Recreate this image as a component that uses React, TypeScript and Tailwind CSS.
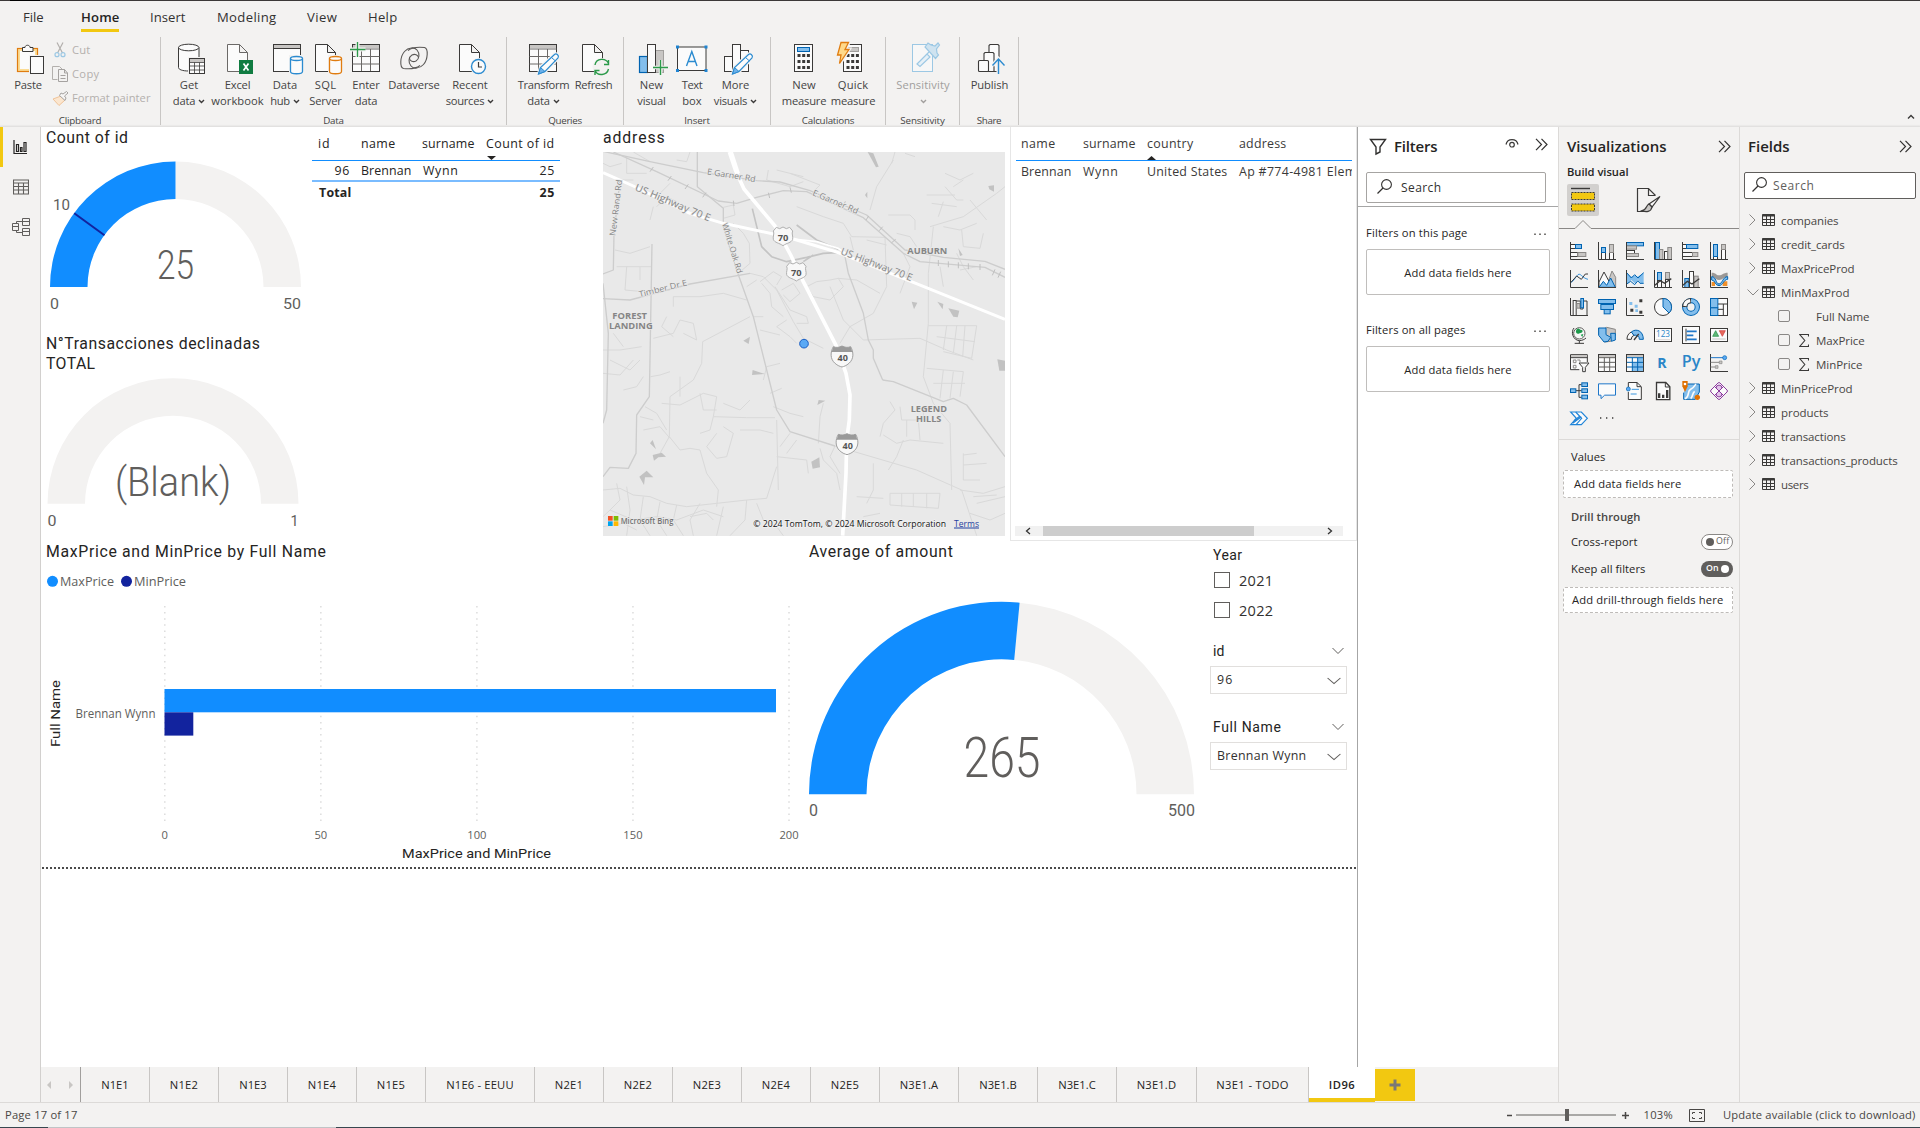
import React, { useLayoutEffect, useRef } from "react";

const INK = "#3b3a39";
const BLUE = "#0063b1";
const SKY = "#83beec";
const GRAY = "#c8c6c4";
const PAPER = "#fbfbfb";

/* Text run tracked so that it spans the given number of pixels. */
function Fit({ w, className = "", children }: { w: number; className?: string; children: string }) {
  const ref = useRef<HTMLSpanElement>(null);
  useLayoutEffect(() => {
    const el = ref.current;
    if (!el) return;
    el.style.letterSpacing = "0px";
    const natural = el.getBoundingClientRect().width;
    el.style.letterSpacing = `${(w + 0.5 - natural) / children.length}px`;
  }, [w, children]);
  return (
    <span ref={ref} className={`inline-block whitespace-pre ${className}`}>
      {children}
    </span>
  );
}

type BoxProps = { x: number; y: number; w: number; h: number; children: React.ReactNode; className?: string };
const Draw = ({ x, y, w, h, children, className = "" }: BoxProps) => (
  <svg width={w} height={h} viewBox={`${x} ${y} ${w} ${h}`} fill="none" className={`block shrink-0 overflow-visible ${className}`}>
    {children}
  </svg>
);

const R = ({ b, f = PAPER, s = INK, sw = 1 }: { b: [number, number, number, number]; f?: string; s?: string; sw?: number }) => (
  <rect x={b[0]} y={b[1]} width={b[2]} height={b[3]} fill={f} stroke={s} strokeWidth={sw} />
);

/* ---------- Ribbon icons ---------- */

const PasteIcon = () => (
  <Draw x={16} y={43} w={30} h={32}>
    <R b={[17.5, 48.5, 20, 23]} f="#fbdc94" s="#e07c10" sw={1.2} />
    <rect x="20" y="51" width="15" height="18" fill={PAPER} />
    <path d="M22.5 51.5v-4h2.5c0-3 5-3 5 0h3v4z" fill={PAPER} stroke={INK} />
    <rect x="29" y="55" width="15" height="19" fill="#f3f2f1" />
    <R b={[30.5, 56.5, 13, 17]} />
  </Draw>
);
const CutIcon = () => (
  <Draw x={53} y={42} w={15} h={16}>
    <path d="M57 42.5 62.5 53M63 42.5 57.500 53" stroke="#b3b0ad" strokeWidth="1.2" />
    <circle cx="57" cy="54.700" r="2" stroke="#9cc8e4" strokeWidth="1.2" />
    <circle cx="63" cy="54.700" r="2" stroke="#9cc8e4" strokeWidth="1.2" />
  </Draw>
);
const CopyIcon = () => (
  <Draw x={52} y={65} w={17} h={17}>
    <path d="M57.500 78.500h-5v-13h7l3 3" stroke="#b3b0ad" />
    <path d="M58.500 68.500h6l3 3.500v8.500h-9zM64.500 68.500v3.500h3M60.500 74.500h5M60.500 77.500h5" stroke="#a5a2a0" />
  </Draw>
);
const PainterIcon = () => (
  <Draw x={52} y={88} w={17} h={17}>
    <path d="m53 97 8-3 4 4-6 5.500z" fill="#fbe6cf" stroke="#efc399" />
    <path d="m59.500 93.500 5.500 5 1-2.500-1.500-2 3.500-3-1.500-1.500-3.500 2.500-2-1z" fill="#f6f5f4" stroke="#a5a2a0" />
  </Draw>
);
const GetDataIcon = () => (
  <Draw x={177} y={43} w={30} h={32}>
    <path d="M178.500 47.500v20c0 2 4 3.500 10 3.500h10.500v-23.500" fill={PAPER} stroke={INK} />
    <ellipse cx="188.700" cy="47.500" rx="10.200" ry="3.300" fill={PAPER} stroke={INK} />
    <rect x="188" y="57" width="18" height="18" fill="#f3f2f1" />
    <R b={[189.500, 58.500, 15, 15]} />
    <path d="M190 60.500h14" stroke={GRAY} strokeWidth="3" />
    <path d="M189.500 62.500h15M189.500 66h15M189.500 70h15M194.500 62.500v11M199.500 62.500v11" stroke={INK} strokeWidth=".8" />
  </Draw>
);
const Page = ({ x, y = 44.5, w = 20, h = 27, s = INK }: { x: number; y?: number; w?: number; h?: number; s?: string }) => (
  <path d={`M${x} ${y}h${w - 8}l8 8v${h - 8}h-${w}zM${x + w - 8} ${y}v8h8`} fill={PAPER} stroke={s} />
);
const ExcelIcon = () => (
  <Draw x={226} y={43} w={28} h={32}>
    <Page x={227.5} s="#6b6967" />
    <rect x="239" y="60" width="14" height="14" fill="#107c41" />
    <path d="m243.500 63.500 5 7M248.500 63.500l-5 7" stroke="#fff" strokeWidth="1.700" />
  </Draw>
);
const Cyl = ({ x, c }: { x: number; c: string }) => (
  <>
    <rect x={x - 1.5} y="55" width="15" height="20" fill="#f3f2f1" />
    <path d={`M${x} 58.500v13c0 3 12 3 12 0v-13`} fill={PAPER} stroke={c} strokeWidth="1.300" />
    <ellipse cx={x + 6} cy="58.500" rx="6" ry="2" fill={PAPER} stroke={c} strokeWidth="1.300" />
  </>
);
const DataHubIcon = () => (
  <Draw x={271} y={43} w={32} h={32}>
    <R b={[272.500, 44.500, 27, 27]} />
    <path d="M273 46.500h26" stroke={GRAY} strokeWidth="3" />
    <path d="M272.500 48.500h27" stroke={INK} />
    <Cyl x={289.500} c="#2b8bd0" />
  </Draw>
);
const SqlIcon = () => (
  <Draw x={314} y={43} w={29} h={32}>
    <Page x={315.500} />
    <Cyl x={329.500} c="#e07c10" />
  </Draw>
);
const EnterDataIcon = () => (
  <Draw x={349} y={43} w={32} h={32}>
    <R b={[352.500, 44.500, 27, 27]} />
    <path d="M353 46.500h26" stroke={GRAY} strokeWidth="3" />
    <path d="M352.500 49h27M352.500 56.500h27M352.500 64h27M361.500 49v22M370.500 49v22" stroke="#6b6967" />
    <path d="M350 49.500h15.500M357.500 42v15" stroke="#f3f2f1" strokeWidth="4" />
    <path d="M350 49.500h15.500M357.500 42v15" stroke="#2b9a4a" strokeWidth="1.300" />
  </Draw>
);
const DataverseIcon = () => (
  <Draw x={399} y={43} w={30} h={32}>
    <g stroke="#5a5856" strokeWidth="1.100">
      <path d="M420 65.500c-5 4-12 3.500-16.500 3-4-1-3.500-12 1-17 4-4.500 10-4.500 12.500-1.500 3 3.500 2.500 9-1 11-3 1.500-6 0-6.500-2.500" />
      <path d="M408 50.500c5-4 12-3.500 16.500-3 4 1 3.500 12-1 17-4 4.500-10 4.500-12.500 1.500-3-3.500-2.500-9 1-11 3-1.500 6 0 6.500 2.500" />
    </g>
  </Draw>
);
const RecentIcon = () => (
  <Draw x={458} y={43} w={29} h={32}>
    <Page x={459.500} />
    <circle cx="478.500" cy="66.500" r="8.500" fill="#f3f2f1" />
    <circle cx="478.500" cy="66.500" r="7" fill={PAPER} stroke="#2b8bd0" strokeWidth="1.400" />
    <path d="M478.500 62v5h3.500" stroke={INK} strokeWidth="1.200" />
  </Draw>
);
const Pencil = ({ x }: { x: number }) => (
  <g transform={`translate(${x} 54)`}>
    <path d="m0 20 2-7L16 0c2.500-1 5 1.500 4 4L7 17.500z" fill="#f3f2f1" stroke="#f3f2f1" strokeWidth="3" />
    <path d="m0 20 2-6.500L16 .5c2-1.500 5 1 3.500 3.500L6.500 17.500z" fill={PAPER} stroke="#2b8bd0" strokeWidth="1.200" />
    <path d="m0 20 2-6.500 4.500 4z" fill="#6db1ea" stroke="#2b8bd0" />
    <path d="m13 3.500 4 3.500" stroke="#2b8bd0" />
  </g>
);
const TransformIcon = () => (
  <Draw x={528} y={43} w={32} h={32}>
    <R b={[529.500, 44.500, 27, 27]} />
    <path d="M530 46.500h26" stroke={GRAY} strokeWidth="3" />
    <path d="M529.500 49h27M529.500 56.500h27M529.500 64h27M538.500 49v22M547.500 49v22" stroke="#6b6967" />
    <Pencil x={538.500} />
  </Draw>
);
const RefreshIcon = () => (
  <Draw x={581} y={43} w={30} h={32}>
    <Page x={582.500} />
    <circle cx="601.500" cy="67" r="9" fill="#f3f2f1" />
    <path d="M595 65c1-7 11-7.500 13.500-1.500M608.500 60v4.500H604M608.500 69c-1.500 6.500-11 7.500-13.500 1.500M595 75v-4.500h4.500" stroke="#2b9a4a" strokeWidth="1.400" />
  </Draw>
);
const NewVisualIcon = () => (
  <Draw x={638} y={43} w={31} h={32}>
    <R b={[639.500, 56.500, 8, 16]} f={SKY} s={BLUE} sw={1.2} />
    <R b={[655.500, 50.500, 8, 22]} f={GRAY} s="#a19f9d" />
    <R b={[647.500, 44.500, 8, 28]} />
    <path d="M653 67.500h15M660.500 60v15" stroke="#f3f2f1" strokeWidth="3.500" />
    <path d="M653 67.500h15M660.500 60v15" stroke="#2b9a4a" strokeWidth="1.400" />
  </Draw>
);
const TextBoxIcon = () => (
  <Draw x={676} y={43} w={32} h={32}>
    <R b={[677.500, 47, 28.500, 23.500]} />
    <path d="m686.500 66 5.300-14.500L697 66M688.300 61.500h7" stroke="#2b8bd0" strokeWidth="1.400" />
    <path d="M676 45.500h3v3h-3zM704.500 45.500h3v3h-3zM676 69h3v3h-3zM704.500 69h3v3h-3z" fill="#1f84d2" />
  </Draw>
);
const MoreVisualsIcon = () => (
  <Draw x={723} y={43} w={31} h={32}>
    <R b={[724.500, 56.500, 8, 15]} />
    <R b={[740.500, 50.500, 8, 21]} />
    <R b={[732.500, 44.500, 8, 27]} />
    <Pencil x={732.500} />
  </Draw>
);
const CalcBody = ({ x, light }: { x: number; light?: boolean }) => (
  <>
    <R b={[x, 44.5, 18, 27]} />
    <R b={[x + 3, 47.5, 12, 4]} f={light ? GRAY : SKY} s={light ? "#a19f9d" : BLUE} />
    {[54, 60, 66].map((y) =>
      [3, 7.700, 12.400].map((d) => <rect key={`${y}-${d}`} x={x + d} y={y} width="3" height="3" fill={INK} />),
    )}
  </>
);
const MeasureIcon = () => (
  <Draw x={793} y={43} w={22} h={32}>
    <CalcBody x={794.500} />
  </Draw>
);
const QuickIcon = () => (
  <Draw x={836} y={43} w={28} h={32}>
    <CalcBody x={843.500} light />
    <path d="M841 42h8.500l-4 7h4l-10 16 2-9.500H837z" fill="#f3f2f1" stroke="#f3f2f1" strokeWidth="3" />
    <path d="M841 42.500h7.500l-3.500 7h4l-9.500 14 1.500-8.500H837.500z" fill="#ffd98a" stroke="#e07c10" strokeWidth="1.300" />
  </Draw>
);
const SensitivityIcon = () => (
  <Draw x={911} y={43} w={29} h={32}>
    <R b={[912.500, 44.500, 20, 27]} f="#f7f7f7" s="#9cc8e4" />
    <path d="m920 61 9-9M917 64l10-10 3 3-10 9.500z" stroke="#9cc8e4" strokeWidth="1.200" fill="#e6f0f7" />
    <path d="m925 47 3-4 3 2 4 1 3-3 1.500 2-3 4 .5 4 1.500 2-3 3.500z" fill="#cfe3f0" stroke="#9cc8e4" strokeWidth="1.200" />
  </Draw>
);
const PublishIcon = () => (
  <Draw x={977} y={43} w={30} h={32}>
    <g fill={PAPER} stroke={INK} strokeWidth="1.100">
      <path d="M989 71.500V45.500l1-1h8l1 1v26z" />
      <path d="M984 71.500V53.500l1-1h8l1 1v18z" />
      <rect x="978.500" y="60.500" width="10" height="11" rx="1" />
    </g>
    <path d="M998.500 75V59M992.500 65.500l6-6.500 6 6.500" stroke="#f3f2f1" strokeWidth="4" />
    <path d="M998.500 74V59.500M992.500 65.500l6-6.500 6 6.500" stroke="#2b8bd0" strokeWidth="1.400" />
  </Draw>
);

const Caret = ({ c = "#3b3a39" }: { c?: string }) => (
  <svg width="7" height="5" viewBox="0 0 7 5" fill="none" className="shrink-0">
    <path d="m1 1 2.500 2.500L6 1" stroke={c} strokeWidth="1.400" />
  </svg>
);

type Item = { w: number; icon: React.ReactNode; a: [string, number]; b?: [string, number]; caret?: boolean; dim?: boolean; dx?: string };
const RibbonItem = ({ w, icon, a, b, caret, dim, dx = "" }: Item) => (
  <div className={`flex shrink-0 flex-col items-center pt-[6px] text-[11.2px] ${dim ? "text-[#a19f9d]" : "text-[#444]"}`} style={{ width: w }}>
    <div className={`flex h-8 items-start ${dx}`}>{icon}</div>
    <div className="mt-[2px] flex h-4 items-center">
      <Fit w={a[1]}>{a[0]}</Fit>
    </div>
    <div className="flex h-4 items-center gap-[3px]">
      {b && <Fit w={b[1]}>{b[0]}</Fit>}
      {caret && <Caret c={dim ? "#a19f9d" : "#3b3a39"} />}
    </div>
  </div>
);
const RibbonGroup = ({ w, pl, label, lw, items }: { w: number; pl: number; label: string; lw: number; items: Item[] }) => (
  <div className="flex h-[88px] shrink-0 flex-col border-r border-[#c8c6c4]" style={{ width: w }}>
    <div className="flex h-[76px]" style={{ paddingLeft: pl }}>
      {items.map((it, i) => (
        <RibbonItem key={i} {...it} />
      ))}
    </div>
    <div className="flex h-[14px] items-center justify-center pt-[5px] text-[9.800px] leading-[14px] text-[#444]">
      <Fit w={lw}>{label}</Fit>
    </div>
  </div>
);

const Ribbon = () => (
  <div className="flex h-[90px] shrink-0 bg-[#f3f2f1]">
    <div className="flex h-[88px] w-[161px] shrink-0 flex-col border-r border-[#c8c6c4] text-[11.2px]">
      <div className="flex h-[76px]">
        <div className="flex w-[52px] flex-col items-center pt-[6px] pl-[4px] text-[#444]">
          <div className="flex h-8 pl-[6px]"><PasteIcon /></div>
          <div className="mt-[2px] flex h-4 items-center"><Fit w={27}>Paste</Fit></div>
        </div>
        <div className="flex flex-col pt-[1px] text-[#b3b0ad]">
          <div className="flex h-6 items-center gap-[4px] pl-px"><CutIcon /><Fit w={18}>Cut</Fit></div>
          <div className="flex h-6 items-center gap-[3px]"><CopyIcon /><Fit w={27}>Copy</Fit></div>
          <div className="flex h-6 items-center gap-[3px]"><PainterIcon /><Fit w={78}>Format painter</Fit></div>
        </div>
      </div>
      <div className="flex h-[14px] items-center justify-center pt-[5px] text-[9.800px] leading-[14px] text-[#444]"><Fit w={42}>Clipboard</Fit></div>
    </div>
    <RibbonGroup w={346} pl={8} label="Data" lw={20} items={[
      { w: 40, icon: <GetDataIcon />, a: ["Get", 18], b: ["data", 22], caret: true, dx: "pl-[6px]" },
      { w: 57, icon: <ExcelIcon />, a: ["Excel", 25], b: ["workbook", 52], dx: "pl-[4px]" },
      { w: 38, icon: <DataHubIcon />, a: ["Data", 24], b: ["hub", 19], caret: true, dx: "pl-[5px]" },
      { w: 43, icon: <SqlIcon />, a: ["SQL", 21], b: ["Server", 32], dx: "pl-[5px]" },
      { w: 38, icon: <EnterDataIcon />, a: ["Enter", 27], b: ["data", 22], dx: "pr-[2px]" },
      { w: 58, icon: <DataverseIcon />, a: ["Dataverse", 51] },
      { w: 54, icon: <RecentIcon />, a: ["Recent", 35], b: ["sources", 38], caret: true, dx: "pl-[5px]" },
    ]} />
    <RibbonGroup w={117} pl={8} label="Queries" lw={33} items={[
      { w: 57, icon: <TransformIcon />, a: ["Transform", 51], b: ["data", 22], caret: true },
      { w: 43, icon: <RefreshIcon />, a: ["Refresh", 37], dx: "pl-[4px]" },
    ]} />
    <RibbonGroup w={147} pl={8} label="Insert" lw={25} items={[
      { w: 39, icon: <NewVisualIcon />, a: ["New", 23], b: ["visual", 28], dx: "pl-[4px]" },
      { w: 42, icon: <TextBoxIcon />, a: ["Text", 20], b: ["box", 19] },
      { w: 45, icon: <MoreVisualsIcon />, a: ["More", 27], b: ["visuals", 33], caret: true, dx: "pl-[6px]" },
    ]} />
    <RibbonGroup w={115} pl={8} label="Calculations" lw={52} items={[
      { w: 50, icon: <MeasureIcon />, a: ["New", 23], b: ["measure", 44] },
      { w: 48, icon: <QuickIcon />, a: ["Quick", 30], b: ["measure", 44], dx: "pr-[6px]" },
    ]} />
    <RibbonGroup w={74} pl={8} label="Sensitivity" lw={44} items={[
      { w: 58, icon: <SensitivityIcon />, a: ["Sensitivity", 53], caret: true, dim: true, dx: "pl-[5px]" },
    ]} />
    <RibbonGroup w={59} pl={8} label="Share" lw={24} items={[{ w: 43, icon: <PublishIcon />, a: ["Publish", 37], dx: "pl-[4px]" }]} />
    <div className="flex flex-1 items-end justify-end pr-[5px] pb-[7px]">
      <svg width="8" height="6" viewBox="0 0 8 6" fill="none"><path d="m1 4.500 3-3 3 3" stroke={INK} strokeWidth="1.400" /></svg>
    </div>
  </div>
);

const menus: [string, number, number][] = [
  ["File", 20, 38], ["Home", 38, 31], ["Insert", 35, 32], ["Modeling", 59, 31], ["View", 30, 31], ["Help", 29, 0],
];
const Menu = () => (
  <div className="flex h-9 shrink-0 bg-[#f3f2f1] pl-[23px] text-[13.100px] text-[#323130]">
    {menus.map(([t, w, gap]) => (
      <div key={t} className="flex shrink-0 flex-col" style={{ marginRight: gap, width: w }}>
        <div className={`flex h-7 items-center pt-[5px] ${t === "Home" ? "font-semibold text-[#252423]" : ""}`}>
          <Fit w={w}>{t}</Fit>
        </div>
        {t === "Home" && <div className="h-[3px] bg-[#f2c811]" />}
      </div>
    ))}
  </div>
);

/* ---------- Canvas visuals ---------- */

type TProps = { x: number; y: number; w?: number; s: number; a?: "start" | "middle" | "end"; c?: string; wt?: number; f?: string; children: string; rot?: number };
const ST = ({ x, y, w, s, a = "start", c = "#605e5c", wt = 400, f = "Roboto, sans-serif", children, rot }: TProps) => (
  <text
    x={x} y={y} fontSize={s} fill={c} fontWeight={wt} fontFamily={f} textAnchor={a}
    textLength={w} lengthAdjust="spacingAndGlyphs"
    transform={rot ? `rotate(${rot} ${x} ${y})` : undefined}
  >
    {children}
  </text>
);

function arc(cx: number, cy: number, R0: number, r0: number, from: number, to: number) {
  const p = (r: number, t: number) => `${cx - r * Math.cos(Math.PI * t)} ${cy - r * Math.sin(Math.PI * t)}`;
  return `M${p(R0, from)}A${R0} ${R0} 0 0 1 ${p(R0, to)}L${p(r0, to)}A${r0} ${r0} 0 0 0 ${p(r0, from)}Z`;
}
const Gauge = ({ cx, cy, r1, r2, v, children }: { cx: number; cy: number; r1: number; r2: number; v: number; children?: React.ReactNode }) => (
  <>
    <path d={arc(cx, cy, r1, r2, v, 1)} fill="#f3f2f1" />
    {v > 0 && <path d={arc(cx, cy, r1, r2, 0, v)} fill="#118dff" />}
    {children}
  </>
);

const SEG = "'Open Sans', sans-serif";

const roadsMid = [
  "M39 94 180 125 340 158 500 182 570 186 660 212 830 285 945 390 1060 412 1185 424 1245 448",
  "M70 96 200 155 385 243 440 250 500 232 580 212 650 215 820 293 940 400 990 425 1185 442 1245 472",
  "M322 96V200L400 265V320L440 450 490 590 560 870 600 935 735 978",
  "M39 536 120 540 300 492 480 460",
  "M90 180 72 340 70 450 39 462M39 490 55 640 50 870 39 910",
  "M186 372 178 830 140 885 138 1000 115 1045 60 1042 39 1070",
  "M878 780 910 785 1060 845 1090 835 1130 855 1245 1010",
  "M765 410 775 460 820 580 835 660 850 690 850 715 878 780",
];
const roadsThin = [
  "M735 978 980 1050 1115 1110 1160 1247M445 460 480 430 478 370 460 340 430 310M400 262 430 255 435 285 400 295",
  "M480 460 520 470 560 510 610 605 640 655 700 685M510 485 550 455 575 470 560 495M575 510 610 490 630 520 600 545 580 525",
  "M555 500 600 570 650 590 655 610 620 610M590 600 560 620 600 650 620 670M515 490 540 520 545 560 580 590",
  "M650 500 680 485 720 480 745 475 760 500 720 540 670 530zM745 475 800 480 870 520M720 500 760 600 820 660 990 655 1070 690 1150 720",
  "M785 350 885 352 890 500 850 580 780 620 750 670M830 360 890 375M790 390 780 350",
  "M535 150 530 180 600 200 640 185M600 160 690 195 670 215M560 150 640 170M620 260 700 290 760 310 785 350",
  "M1030 320 1015 460 1015 610 1000 770 1030 850 1080 910 1085 1110M1020 320 1120 290 1220 220 1245 200M1140 240 1190 300",
  "M1010 225 1095 225M1065 160 1110 180 1150 160M1065 200 1100 240 1120 240M1090 200 1120 180M1025 250 1100 260M1045 290 1060 245",
  "M910 120 860 200 840 270M915 96 905 130M945 100 975 110M895 285 960 285 975 300 975 330M920 340 960 350 980 380M940 400 960 440 930 520",
  "M1115 330 1120 380 1170 385 1180 340M1060 320 1110 330 1160 310M1100 400 1120 440 1150 480M1110 450 1160 440M1050 440 1060 500",
  "M1015 617H1160L1145 715 1060 695M1070 617 1060 690M1100 617 1090 700M1125 617 1118 710M1040 650 1155 665M1010 745 1120 755 1110 830M1030 790H1125M1060 750 1050 835M1090 755 1080 835",
  "M39 690 90 690 155 680M60 720 120 750 150 720M70 640 100 680M39 760 90 765 130 720M100 810 140 800 160 770M80 180 130 180M95 130 60 140 39 130M110 110 110 160 170 160",
  "M80 440H185M110 440 105 510 160 515M150 440V480M75 390 120 400 180 380M250 530 330 530 400 520 470 540M250 530V560",
  "M190 655 250 640 270 600 310 610 320 660 280 640M230 590 215 620 250 650M338 665 480 590M338 665 335 730 310 780 240 830 238 950 210 1000",
  "M182 770 210 765 240 755M270 770 270 830M215 850 270 855 300 840 340 820 380 830 370 890 470 893 555 893M370 890 360 930 330 940",
  "M330 820 340 870 380 870M400 850 450 870 480 840M380 940 350 980 380 1015 410 1010 430 940 400 920M450 930 510 930 550 940",
  "M165 860 200 880 230 930M238 950 270 990 300 985 330 990 350 1060 385 1110 380 1160M240 955 210 920 160 930M190 900 150 890",
  "M510 630 570 645M490 590 520 590M570 730 530 740 520 780M540 820 575 805M550 860 600 880 640 890M560 900 565 1110",
  "M700 850 690 890 685 970M560 1010 650 1020 655 1060M690 985 700 1020 740 1060 750 1110M735 978 720 1010 750 1060M600 940 570 980M620 960 590 1000",
  "M39 1110 90 1105 130 1125 180 1130 230 1150 290 1160 380 1150 470 1140 530 1135M80 1090 90 1140 60 1170 39 1190M110 1100 120 1170 110 1247",
  "M160 1130 150 1200 180 1247M210 1145 200 1200 230 1247M260 1155 250 1200 280 1247M330 1150 300 1200 310 1247M60 1170 130 1200 200 1190 260 1200 340 1170 400 1190",
  "M470 1140 465 1200 420 1247M530 1135 560 1040M500 1150 520 1200 560 1220 580 1247M400 1160 380 1247M39 1220 100 1210 140 1230M300 1190 350 1180 370 1200",
  "M900 845 915 870 880 910 870 950M930 860 935 900 1000 900 1000 870M985 900 990 960M950 900 950 950M880 945 920 970 960 960 1060 970",
  "M940 960 920 1010 895 1050M850 1030 850 1110 830 1150M900 1120H1050L1045 1165 900 1155zM935 1120V1160M970 1120V1160M1010 1120V1165M800 1130 880 1135M820 1190 870 1180",
  "M1120 1000 1120 1080 1170 1080M1120 1035 1190 1030M1120 1005 1160 1000M1110 1110 1180 1120 1245 1100M1150 1130 1220 1125M1160 1150 1245 1130M1140 1180 1200 1200 1245 1180",
  "M200 260 230 230 260 245M180 300 190 260M240 190 210 220M260 120 290 125 300 96M130 96 180 125M500 480 470 500",
];
const shapes = [
  "M833 96 850 100 866 140 858 142z", "M1195 198 1212 196 1212 215 1198 208z", "M825 225 832 215 832 235z",
  "M460 662 480 650 476 672z", "M488 750 525 762 486 765z", "M682 855 686 840 706 842z", "M965 545 982 548 972 568z", "M1042 545 1060 552 1058 568z",
  "M1075 565 1108 572 1103 592 1090 590z", "M1222 718 1245 722V752H1228z", "M180 970 188 960 198 988z", "M188 1005 215 998 228 1010 205 1012 192 1022z",
  "M148 1070 170 1052 190 1072 165 1072 162 1095z", "M664 1025 688 1012 690 1042 668 1046z", "M1105 385 1118 405 1110 408z",
];
const US70 = "M39 158 130 198 300 280 400 310 550 342 610 357 740 396 970 487 1245 598";
const I40 = "M418 96 436 150 462 207 555 318 602 405 640 485 740 680 768 760 780 825 778 900 770 960 768 1060 758 1247";

const MapLabel = ({ x, y, w, s = 25, rot, c = "#858585", wt = 600, children }: { x: number; y: number; w: number; s?: number; rot?: number; c?: string; wt?: number; children: string }) => (
  <text x={x} y={y} fontSize={s} fontWeight={wt} fill={c} fontFamily={SEG} textLength={w} lengthAdjust="spacingAndGlyphs" stroke="#ebebeb" strokeWidth="4" paintOrder="stroke" transform={rot ? `rotate(${rot} ${x} ${y})` : undefined}>
    {children}
  </text>
);
const Shield70 = ({ x, y }: { x: number; y: number }) => (
  <g transform={`translate(${x} ${y})`}>
    <path d="M-20-27-10-23 0-28 10-23 20-27 29-16C25-8 31 0 29 9c-3 10-18 11-29 19C-11 20-26 19-29 9-31 0-25-8-29-16Z" fill="#f8f8f8" stroke="#b0b0b0" strokeWidth="3" />
    <text x="0" y="13" fontSize="28" fontWeight="700" fill="#555" textAnchor="middle" fontFamily={SEG}>70</text>
  </g>
);
const Shield40 = ({ x, y }: { x: number; y: number }) => (
  <g transform={`translate(${x} ${y})`}>
    <path d="M-26-28C-16-24-8-26 0-30 8-26 16-24 26-28 35-12 36 8 22 21 12 30 6 31 0 33-6 31-12 30-22 21-36 8-35-12-26-28Z" fill="#f8f8f8" stroke="#a0a0a0" strokeWidth="3" />
    <path d="M-26-28C-16-24-8-26 0-30 8-26 16-24 26-28L31-12H-31z" fill="#9a9a9a" />
    <text x="2" y="16" fontSize="27" fontWeight="700" fill="#555" textAnchor="middle" fontFamily={SEG}>40</text>
  </g>
);

const MapVisual = () => (
  <svg width="402" height="384" viewBox="39 96 1206 1152" className="block bg-[#e9e9e9]">
    <g fill="none" strokeLinejoin="round">
      {roadsThin.map((d) => <path key={d} d={d} stroke="#d9d9d9" strokeWidth="3" />)}
      {roadsMid.map((d) => <path key={d} d={d} stroke="#cdcdcd" strokeWidth="4" />)}
      <path d="M487 266 515 380 545 410 590 425 650 412 700 400 740 398M620 315 680 360 745 388M640 425 670 405" stroke="#c4c4c4" strokeWidth="5" />
      <path d="M180 155l10-14M234 182l10-14M285 207l10-14M338 232l10-14M430 242l2 16M535 218l4 16M600 202l4 16M760 258l6-14M828 300l8-12M868 332l10-12M905 368l12-10M1045 420v18M1075 424v18M1105 427v18M1135 430v18M1170 432v18M1215 448l-8 18M1232 455l-8 18" stroke="#c0c0c0" strokeWidth="3" />
      <path d={US70} stroke="#fff" strokeWidth="9" />
      <path d={I40} stroke="#fff" strokeWidth="11" />
      <path d="M610 357 680 365 745 385 770 402" stroke="#fff" strokeWidth="5" />
      <path d="M425 96 446 160" stroke="#fff" strokeWidth="8" />
    </g>
    {shapes.map((d) => <path key={d} d={d} fill="#c2c2c2" />)}
    <MapLabel x={350} y={163} w={147} rot={9} s={25} wt={500}>E Garner Rd</MapLabel>
    <MapLabel x={666} y={225} w={146} rot={23} s={25} wt={500}>E Garner Rd</MapLabel>
    <MapLabel x={133} y={210} w={243} rot={23} s={30} wt={500}>US Highway 70 E</MapLabel>
    <MapLabel x={750} y={402} w={228} rot={21} s={30} wt={500}>US Highway 70 E</MapLabel>
    <MapLabel x={76} y={349} w={170} rot={-83} s={25} wt={500}>New Rand Rd</MapLabel>
    <MapLabel x={396} y={312} w={156} rot={73} s={25} wt={500}>White Oak Rd</MapLabel>
    <MapLabel x={149} y={532} w={148} rot={-14} s={25} wt={500}>Timber Dr E</MapLabel>
    <MapLabel x={952} y={403} w={120} wt={700} s={28}>AUBURN</MapLabel>
    <MapLabel x={67} y={596} w={104} wt={700} s={28}>FOREST</MapLabel>
    <MapLabel x={57} y={628} w={131} wt={700} s={28}>LANDING</MapLabel>
    <MapLabel x={962} y={875} w={109} wt={700} s={28}>LEGEND</MapLabel>
    <MapLabel x={978} y={906} w={76} wt={700} s={28}>HILLS</MapLabel>
    <Shield70 x={579} y={349} />
    <Shield70 x={619} y={455} />
    <Shield40 x={756} y={708} />
    <Shield40 x={771} y={971} />
    <circle cx="642" cy="671" r="13" fill="#5aa9f5" stroke="#1b5fc4" strokeWidth="3" />
    <path d="M54 1188h14v14H54z" fill="#f25022" /><path d="M71 1188h14v14H71z" fill="#7fba00" />
    <path d="M54 1204h14v14H54z" fill="#00a4ef" /><path d="M71 1204h14v14H71z" fill="#ffb900" />
    <MapLabel x={92} y={1212} w={158} c="#737373" wt={600} s={25}>Microsoft Bing</MapLabel>
    <text x="490" y="1220" fontSize="25" fill="#111" fontFamily={SEG} textLength="578" lengthAdjust="spacingAndGlyphs" stroke="#f2f2f2" strokeWidth="4" paintOrder="stroke">© 2024 TomTom, © 2024 Microsoft Corporation</text>
    <text x="1092" y="1220" fontSize="25" fill="#1f3fa0" fontFamily={SEG} textLength="75" lengthAdjust="spacingAndGlyphs">Terms</text>
    <path d="M1092 1224h75" stroke="#1f3fa0" strokeWidth="3" />
  </svg>
);

const Chev = ({ w = 12 }: { w?: number }) => (
  <svg width={w} height="8" viewBox="0 0 12 8" preserveAspectRatio="none" fill="none" className="shrink-0">
    <path d="m.500 1 5.500 5.500L11.500 1" stroke="#605e5c" strokeWidth="1" />
  </svg>
);

const TitleText = ({ w, children }: { w: number; children: string }) => (
  <div className="flex h-5 items-center font-[Roboto] text-[15.800px] text-[#252423]"><Fit w={w}>{children}</Fit></div>
);

const LeftGauges = () => (
  <div className="flex w-[271px] shrink-0 flex-col pt-px pl-[5px]">
    <TitleText w={82}>Count of id</TitleText>
    <Draw x={46} y={148} w={260} h={182}>
      <Gauge cx={175.5} cy={287} r1={125.5} r2={88} v={0.5}>
        <path d="M74.200 213.300 104.500 235.300" stroke="#12239e" strokeWidth="2" />
      </Gauge>
      <ST x={157} y={279} w={37} s={41} wt={300}>25</ST>
      <ST x={50} y={309} w={9} s={15}>0</ST>
      <ST x={283} y={309} w={18} s={15}>50</ST>
      <ST x={53} y={210} w={17} s={15}>10</ST>
    </Draw>
    <div className="mt-1"><TitleText w={214}>N°Transacciones declinadas</TitleText></div>
    <TitleText w={49}>TOTAL</TitleText>
    <Draw x={46} y={374} w={260} h={166}>
      <Gauge cx={173} cy={503.700} r1={125.500} r2={88} v={0} />
      <ST x={115} y={495.700} w={116} s={40} wt={300}>(Blank)</ST>
      <ST x={47.500} y={526} w={9} s={15}>0</ST>
      <ST x={290.500} y={526} w={8} s={15}>1</ST>
    </Draw>
  </div>
);

const CountTable = () => (
  <div className="mt-[6px] flex w-[248px] shrink-0 flex-col text-[12.400px] text-[#252423]">
    <div className="flex h-[23px] items-center pl-[6px]">
      <div className="w-[43px]"><Fit w={12}>id</Fit></div>
      <div className="w-[61px]"><Fit w={34}>name</Fit></div>
      <div className="w-[64px]"><Fit w={52}>surname</Fit></div>
      <Fit w={68}>Count of id</Fit>
    </div>
    <div className="flex h-[5px] items-start border-b border-[#118dff] pl-[175px]">
      <svg width="10" height="4"><path d="M0 0h9L4.500 4z" fill="#252423" /></svg>
    </div>
    <div className="flex h-[21px] items-center border-b-2 border-[#7abcff] pt-[2px]">
      <div className="w-[49px] pr-[11px] text-right"><Fit w={15}>96</Fit></div>
      <div className="w-[62px]"><Fit w={50}>Brennan</Fit></div>
      <div className="w-[63px]"><Fit w={35}>Wynn</Fit></div>
      <div className="w-[69px] text-right"><Fit w={15}>25</Fit></div>
    </div>
    <div className="flex h-[22px] items-center justify-between pr-[5px] pl-[7px] font-bold">
      <Fit w={32}>Total</Fit>
      <Fit w={15}>25</Fit>
    </div>
  </div>
);

const AddressTable = () => (
  <div className="flex h-[414px] w-[347px] shrink-0 flex-col border border-t-0 border-[#e6e6e6] pt-[6px] text-[12.400px] text-[#3b3a39]">
    <div className="mr-[4px] ml-[5px] flex flex-col overflow-hidden">
      <div className="flex h-[23px] items-center pl-[5px]">
        <div className="w-[62px]"><Fit w={34}>name</Fit></div>
        <div className="w-[64px]"><Fit w={52}>surname</Fit></div>
        <div className="w-[92px]"><Fit w={46}>country</Fit></div>
        <Fit w={47}>address</Fit>
      </div>
      <div className="flex h-[5px] items-start border-b border-[#118dff] pl-[131px]">
        <svg width="10" height="4"><path d="M0 4h9L4.500 0z" fill="#252423" /></svg>
      </div>
      <div className="flex h-[21px] items-center pt-[2px] pl-[5px]">
        <div className="w-[62px] shrink-0"><Fit w={50}>Brennan</Fit></div>
        <div className="w-[64px] shrink-0"><Fit w={35}>Wynn</Fit></div>
        <div className="w-[92px] shrink-0"><Fit w={80}>United States</Fit></div>
        <Fit w={117} className="shrink-0">Ap #774-4981 Elem</Fit>
      </div>
    </div>
    <div className="mt-auto mb-[4px] ml-[4px] flex h-[10px] w-[328px] items-center justify-between bg-[#f1f1f1] px-[10px]">
      <svg width="6" height="8" viewBox="0 0 6 8" fill="none"><path d="M5 1 1.500 4 5 7" stroke="#333" strokeWidth="1.300" /></svg>
      <div className="mr-auto ml-[12px] h-[10px] w-[211px] bg-[#cdcdcd]" />
      <svg width="6" height="8" viewBox="0 0 6 8" fill="none"><path d="m1 1 3.500 3L1 7" stroke="#333" strokeWidth="1.300" /></svg>
    </div>
  </div>
);

const BarChart = () => (
  <div className="flex w-[768px] shrink-0 flex-col pt-px pl-[5px]">
    <TitleText w={280}>MaxPrice and MinPrice by Full Name</TitleText>
    <Draw x={46} y={562} w={755} h={304}>
      <circle cx="52.500" cy="581.300" r="5.500" fill="#118dff" />
      <circle cx="126.500" cy="581.300" r="5.500" fill="#12239e" />
      <ST x={60} y={586} w={54} s={13} f={SEG}>MaxPrice</ST>
      <ST x={134} y={586} w={52} s={13} f={SEG}>MinPrice</ST>
      {[0, 50, 100, 150, 200].map((v) => {
        const x = 164.800 + v * 3.121;
        return (
          <g key={v}>
            <path d={`M${x} 606V825`} stroke="#dcdcdc" strokeWidth="1.500" strokeDasharray="1.500 4.600" />
            <text x={x} y="839" fontSize="11.200" fill="#605e5c" fontFamily={SEG} textAnchor="middle">{v}</text>
          </g>
        );
      })}
      <rect x="164.500" y="689" width="611.500" height="23.300" fill="#118dff" />
      <rect x="164.500" y="712.300" width="28.800" height="23.300" fill="#12239e" />
      <ST x={75.500} y={718} w={80} s={12} f={SEG}>Brennan Wynn</ST>
      <ST x={59.500} y={747} w={67} s={13.500} c="#252423" rot={-90}>Full Name</ST>
      <ST x={402} y={858} w={149} s={13.500} c="#252423">MaxPrice and MinPrice</ST>
    </Draw>
  </div>
);

const AverageGauge = () => (
  <div className="flex w-[400px] shrink-0 flex-col pt-px">
    <TitleText w={144}>Average of amount</TitleText>
    <Draw x={809} y={562} w={390} h={280}>
      <Gauge cx={1001.500} cy={794.300} r1={192.500} r2={135} v={0.53} />
      <ST x={963.500} y={777} w={77} s={56} wt={300}>265</ST>
      <ST x={809} y={816} w={9} s={16}>0</ST>
      <ST x={1168} y={816} w={27} s={16}>500</ST>
    </Draw>
  </div>
);

const SlicerHead = ({ w, t }: { w: number; t: string }) => (
  <div className="flex h-5 items-center justify-between pr-[3px] pl-[3px] font-[Roboto] text-[14px] text-[#252423]">
    <Fit w={w}>{t}</Fit>
    <Chev />
  </div>
);
const SlicerBox = ({ w, t }: { w: number; t: string }) => (
  <div className="flex h-7 items-center justify-between border border-[#e1dfdd] pt-px pr-[5px] pl-[6px] text-[12.400px] text-[#323130]">
    <Fit w={w}>{t}</Fit>
    <Chev w={14} />
  </div>
);
const Slicers = () => (
  <div className="ml-px flex w-[137px] flex-col pt-[4px]">
    <div className="flex h-5 items-center pl-[3px] font-[Roboto] text-[14px] text-[#252423]"><Fit w={29}>Year</Fit></div>
    {["2021", "2022"].map((y) => (
      <div key={y} className="flex h-[30px] items-center gap-[9px] pl-[4px] text-[14.500px] text-[#323130]">
        <div className="size-4 border border-[#605e5c]" />
        <div className="pt-px"><Fit w={34}>{y}</Fit></div>
      </div>
    ))}
    <div className="mt-[16px]"><SlicerHead w={11} t="id" /></div>
    <div className="mt-[5px]"><SlicerBox w={16} t="96" /></div>
    <div className="mt-[23px]"><SlicerHead w={68} t="Full Name" /></div>
    <div className="mt-[5px]"><SlicerBox w={89} t="Brennan Wynn" /></div>
  </div>
);

const Canvas = () => (
  <div className="flex w-[1316px] shrink-0 flex-col bg-white">
    <div className="flex h-[414px]">
      <LeftGauges />
      <CountTable />
      <div className="ml-[43px] flex w-[402px] shrink-0 flex-col pt-px">
        <TitleText w={62}>address</TitleText>
        <div className="mt-1"><MapVisual /></div>
      </div>
      <div className="ml-[5px] flex"><AddressTable /></div>
    </div>
    <div className="flex h-[326px]">
      <BarChart />
      <AverageGauge />
      <Slicers />
    </div>
    <svg width="1316" height="2" className="block"><path d="M1 1h1315" stroke="#4a4a4a" strokeWidth="2" strokeDasharray="2 2" /></svg>
  </div>
);

/* ---------- Right panels ---------- */

const DoubleChev = () => (
  <svg width="13" height="13" viewBox="0 0 13 13" fill="none" className="shrink-0">
    <path d="m1 .800 5.500 5.700L1 12.200M6.500.800 12 6.500l-5.500 5.700" stroke="#323130" strokeWidth="1.200" />
  </svg>
);
const Magnifier = () => (
  <svg width="15" height="15" viewBox="0 0 15 15" fill="none" className="mb-[2px] shrink-0">
    <circle cx="9.500" cy="5.500" r="4.900" stroke="#323130" strokeWidth="1.100" />
    <path d="M6 9 .500 14.500" stroke="#323130" strokeWidth="1.200" />
  </svg>
);
const FilterSection = ({ t, w }: { t: string; w: number }) => (
  <div className="flex flex-col">
    <div className="flex h-5 items-center justify-between pr-[4px] text-[11.200px] text-[#252423]">
      <Fit w={w}>{t}</Fit>
      <svg width="12" height="3" className="mt-[3px]"><path d="M0 .500h2v1.500H0zM5 .500h2v1.500H5zM10 .500h2v1.500h-2z" fill="#7a7876" /></svg>
    </div>
    <div className="mt-[6px] flex h-[46px] items-center justify-center rounded-[2px] border border-[#c0bebc] pt-[3px] text-[11.200px] text-[#252423]">
      <Fit w={107}>Add data fields here</Fit>
    </div>
  </div>
);
const Filters = () => (
  <div className="flex w-[201px] shrink-0 flex-col border-l border-[#a6a6a6] bg-white">
    <div className="flex h-[80px] flex-col border-b border-[#a6a6a6] pl-[8px]">
      <div className="flex h-[36px] items-center pt-[3px] pl-[4px]">
        <Draw x={1370} y={138} w={17} h={17}>
          <path d="M1370.500 139.500h15l-5.500 7.500v5l-4 2v-7z" stroke="#323130" strokeWidth="1.400" />
        </Draw>
        <div className="ml-[7px] text-[15px] font-semibold text-[#252423]"><Fit w={43}>Filters</Fit></div>
        <svg width="14" height="11" viewBox="0 0 14 11" fill="none" className="mb-[6px] ml-[67px]">
          <path d="M1 6.500c1.500-6.500 10.500-6.500 12 0" stroke="#3b3a39" strokeWidth="1.200" /><circle cx="7" cy="6.700" r="2.300" stroke="#3b3a39" strokeWidth="1.200" />
        </svg>
        <div className="mb-[5px] ml-[16px]"><DoubleChev /></div>
      </div>
      <div className="mt-[9px] flex h-[31px] w-[180px] items-center rounded-[2px] border border-[#a6a4a2] pl-[10px] text-[12px] text-[#323130]">
        <Magnifier />
        <div className="ml-[9px]"><Fit w={40}>Search</Fit></div>
      </div>
    </div>
    <div className="flex flex-col gap-[25px] pt-[16px] pr-[8px] pl-[8px]">
      <FilterSection t="Filters on this page" w={101} />
      <FilterSection t="Filters on all pages" w={99} />
    </div>
  </div>
);

const AX = () => <path d="M1.500 0V52.500H54" stroke={INK} strokeWidth="3" />;
const B = ({ b, f = PAPER, s = INK }: { b: [number, number, number, number]; f?: string; s?: string }) => <R b={b} f={f} s={s} sw={3} />;
const GS = "#8a8886";
const vizIcons: React.ReactNode[] = [
  <><B b={[1.5, 7.5, 15, 12]} /><B b={[16.500, 7.500, 18, 12]} f={SKY} s={BLUE} /><B b={[1.500, 31.500, 22, 12]} /><B b={[23.500, 31.500, 24, 12]} f={GRAY} s={GS} /><AX /></>,
  <><B b={[10.500, 31.500, 12, 21]} /><B b={[10.500, 16.500, 12, 15]} f={SKY} s={BLUE} /><B b={[34.500, 31.500, 12, 21]} /><B b={[34.500, 7.500, 12, 24]} f={GRAY} s={GS} /><AX /></>,
  <><B b={[1.500, 1.500, 51, 10]} f={SKY} s={BLUE} /><B b={[1.500, 11.500, 30, 10]} f={GRAY} s={GS} /><B b={[1.500, 25.500, 24, 9]} /><B b={[1.500, 34.500, 36, 9]} f={GRAY} s={GS} /><AX /></>,
  <><B b={[4.500, 1.500, 12, 51]} f={SKY} s={BLUE} /><B b={[16.500, 22.500, 10, 30]} f={GRAY} s={GS} /><B b={[31.500, 28.500, 10, 24]} /><B b={[41.500, 16.500, 11, 36]} f={GRAY} s={GS} /><AX /></>,
  <><B b={[1.500, 7.500, 15, 12]} /><B b={[13.500, 7.500, 34, 12]} f={SKY} s={BLUE} /><B b={[1.500, 31.500, 30, 12]} /><B b={[31.500, 31.500, 16, 12]} f={GRAY} s={GS} /><AX /></>,
  <><B b={[10.500, 28.500, 12, 24]} /><B b={[10.500, 7.500, 12, 36]} f={SKY} s={BLUE} /><B b={[34.500, 22.500, 12, 30]} /><B b={[34.500, 7.500, 12, 15]} f={GRAY} s={GS} /><AX /></>,
  <><path d="M2 38C14 32 16 20 24 14s12 10 30 14" stroke="#3a96dd" strokeWidth="3" /><path d="M2 38 20 18 34 28 46 12H54" stroke={INK} strokeWidth="3" /><AX /></>,
  <><path d="M24 52 42 3 53 22V52z" fill={GRAY} stroke={GS} strokeWidth="3" /><path d="M3 36 18 6 34 36 30 52H3z" fill={PAPER} stroke={INK} strokeWidth="3" /><path d="M3 52 16 34 26 46 38 24 52 52z" fill={SKY} stroke={BLUE} strokeWidth="3" /><AX /></>,
  <><path d="M2 8 16 20 26 16 34 20 53 8V40H44L36 28 28 42 16 30 2 44z" fill={SKY} /><path d="M2 8 16 24 26 14 36 24 53 8M2 42 14 34 26 44 36 32 42 40H53" stroke={BLUE} strokeWidth="3" /><AX /></>,
  <><B b={[10.500, 7.500, 12, 24]} f={SKY} s={BLUE} /><B b={[10.500, 31.500, 12, 21]} /><B b={[34.500, 7.500, 12, 20]} f={GRAY} s={GS} /><B b={[34.500, 28.500, 12, 24]} /><path d="M3 46 18 32 32 40 52 26" stroke={INK} strokeWidth="4" /><AX /></>,
  <><B b={[8.500, 25.500, 12, 27]} f={SKY} s={BLUE} /><B b={[22.500, 4.500, 12, 48]} /><B b={[36.500, 18.500, 12, 34]} f={GRAY} s={GS} /><path d="M3 46 16 34 30 42 52 26" stroke={INK} strokeWidth="4" /><AX /></>,
  <><path d="M5 36h10v12H5zM38 34h14v14H38z" fill="#f0902a" /><path d="M5 8c14 0 12 8 22 8S40 8 53 8v14c-15 0-14 8-26 8S18 22 5 22z" fill="#9a9896" /><path d="M5 20c14 0 12 22 22 22S38 20 53 20v8c-12 0-14 19-26 19S16 30 5 30z" fill={SKY} stroke={BLUE} strokeWidth="3" /><AX /></>,
  <><B b={[9.500, 7.500, 9, 45]} /><path d="M19 9h12v24h8V9h12v43" stroke={INK} strokeWidth="3" /><B b={[20.500, 16.500, 9, 14]} f={GRAY} s={GS} /><B b={[32.500, 1.500, 8, 28]} f={SKY} s={BLUE} /><AX /></>,
  <><B b={[1.500, 4.500, 51, 12]} f={SKY} s={BLUE} /><B b={[8.500, 19.500, 38, 15]} f={SKY} s={BLUE} /><B b={[18.500, 34.500, 18, 13]} f={SKY} s={BLUE} /></>,
  <><AX /><path d="M40 4h9v9h-9zM13 32h9v9h-9zM40 38h9v9h-9z" fill={INK} /><path d="M10 12h9v9h-9zM26 20h9v9h-9zM28 34h8v8h-8z" fill={SKY} /></>,
  <><circle cx="27" cy="27" r="25.500" fill={PAPER} stroke={INK} strokeWidth="3" /><path d="M27 1.500a25.500 25.500 0 0 1 18 43.500L27 27z" fill={SKY} stroke={BLUE} strokeWidth="3" /></>,
  <><circle cx="27" cy="27" r="19" stroke={BLUE} strokeWidth="16" /><circle cx="27" cy="27" r="19" stroke={SKY} strokeWidth="10" /><path d="M8 27a19 19 0 0 1 19-19" stroke={INK} strokeWidth="16" /><path d="M8.500 24a19 19 0 0 1 16-16" stroke={PAPER} strokeWidth="10" /></>,
  <><B b={[1.500, 1.500, 51, 51]} /><B b={[1.500, 1.500, 22, 28]} f={SKY} s={BLUE} /><B b={[1.500, 29.500, 22, 23]} f={SKY} s={BLUE} /><path d="M24 18h28M40 18v34M24 34h16" stroke={INK} strokeWidth="3" /></>,
  <><circle cx="28" cy="22" r="17" fill="#f7f7f7" stroke="#605e5c" strokeWidth="3" /><path d="M20 10c8-6 8 2 14 2s4 8 0 8-10 6-14 2-2-8 0-12M32 26l8-2-3 9z" fill="#1d9a4b" /><path d="M12 6C2 18 8 42 28 44c8 0 16-4 20-8M28 44v8M14 52h28" stroke={INK} strokeWidth="3" /></>,
  <><path d="M2 6c10 6 18 2 24-2l26 6v18L38 46 20 48 2 24z" fill={GRAY} stroke={GS} strokeWidth="3" /><path d="M2 6h22v20l14 8-8 12-12 2L2 28zM38 22h14v20l-12 4z" fill={SKY} stroke={BLUE} strokeWidth="3" /></>,
  <><path d="M3 40a24 24 0 0 1 13-22l8 10a12 12 0 0 0-8 12z" fill={PAPER} stroke={INK} strokeWidth="3" /><path d="M16 18c14-12 36-4 36 22H40a12 12 0 0 0-16-12z" fill={SKY} stroke={BLUE} strokeWidth="3" /><path d="m24 42 14-18" stroke={INK} strokeWidth="4" /></>,
  <><B b={[1.500, 7.500, 51, 39]} /><text x="6" y="34" fontSize="27" fill="#2a86c8" fontFamily={SEG} textLength="42" lengthAdjust="spacingAndGlyphs">123</text><path d="M6 41h42" stroke={GRAY} strokeWidth="2" /></>,
  <><B b={[1.500, 1.500, 51, 51]} /><path d="M12 8v38" stroke={INK} strokeWidth="3" /><path d="M14 16h30M14 28h20M14 40h30" stroke="#1f77c9" strokeWidth="5" /></>,
  <><B b={[1.500, 7.500, 51, 39]} /><path d="m17 14 9 17H8z" fill="#5fb878" stroke="#1d8a40" strokeWidth="2" /><path d="M37 31 28 14h18z" fill="#e66a5c" stroke="#d13438" strokeWidth="2" /><path d="M7 39h40" stroke={GRAY} strokeWidth="3" /></>,
  <><path d="M28 47H1.500v-45H52v22" fill={PAPER} stroke={INK} strokeWidth="3" /><path d="M3 6h48" stroke={GRAY} strokeWidth="6" /><path d="M2 11h50" stroke={INK} strokeWidth="3" /><path d="M10 18h8v8h-8zM10 34h8v8h-8zM22 18h8v6" stroke={GS} strokeWidth="3" /><path d="M27 27h30L46 40v13h-8V40z" fill={PAPER} stroke={INK} strokeWidth="3" /></>,
  <><B b={[1.500, 1.500, 51, 51]} /><path d="M3 6h48" stroke={GRAY} strokeWidth="6" /><path d="M2 11h50M2 25h50M2 39h50M19 11v42M35 11v42" stroke="#605e5c" strokeWidth="3" /></>,
  <><B b={[1.500, 1.500, 51, 51]} /><path d="M35 12h17v40H19V26h16z" fill={SKY} /><path d="M3 6h48" stroke={GRAY} strokeWidth="6" /><path d="M2 11h50M2 25h50M2 39h50M19 11v42M35 11v42" stroke={BLUE} strokeWidth="3" /><path d="M1.500 1.500h51v51h-51z" stroke={INK} strokeWidth="3" /></>,
  <text x="10" y="43" fontSize="44" fontWeight="700" fill="#2a86c8" fontFamily={SEG} textLength="28" lengthAdjust="spacingAndGlyphs">R</text>,
  <text x="-1" y="39" fontSize="46" fontWeight="600" fill="#2a86c8" fontFamily={SEG} textLength="56" lengthAdjust="spacingAndGlyphs">Py</text>,
  <><AX /><path d="M2 11h38" stroke="#1f77c9" strokeWidth="3" /><circle cx="44" cy="11" r="6" fill="#5aa9f5" stroke={BLUE} strokeWidth="2" /><path d="M2 25h26M2 39h14" stroke={GS} strokeWidth="3" /><path d="M28 21h8v8h-8zM16 35h8v8h-8z" fill={GRAY} stroke={GS} strokeWidth="2" /></>,
  <><path d="M17 26h10M35 8h-8v38h8M27 26h8" stroke={INK} strokeWidth="3" /><B b={[1.500, 20.500, 16, 11]} f={SKY} s={BLUE} /><B b={[35.500, 2.500, 17, 11]} f={SKY} s={BLUE} /><B b={[35.500, 20.500, 17, 11]} f={SKY} s={BLUE} /><B b={[35.500, 39.500, 17, 11]} f={SKY} s={BLUE} /></>,
  <path d="M1.500 5.500h51v34H20L9 50V39.500H1.500z" fill={PAPER} stroke="#1f77c9" strokeWidth="3" />,
  <><path d="M7 16V1.500h26L46 14v38.500H7V30" fill={PAPER} stroke={INK} strokeWidth="3" /><path d="M33 2v12h12" stroke={INK} strokeWidth="3" /><circle cx="7" cy="21" r="6" fill="#5aa9f5" stroke={BLUE} strokeWidth="2" /><path d="M17 22h22M14 36h18" stroke="#3a96dd" strokeWidth="3" /></>,
  <><path d="M7.500 1.500h28L47.500 14v39h-40z" fill={PAPER} stroke={INK} strokeWidth="4" /><path d="M34 2v13h13" stroke={INK} strokeWidth="3" /><path d="M12 34h7v14h-7zM24 38h7v10h-7zM36 24h7v24h-7z" fill={INK} /></>,
  <><path d="M16 6H52V30L40 52H5V32" fill={SKY} stroke={BLUE} strokeWidth="3" /><path d="M8 50c16-4 6-22 18-28s10-10 16-16M26 50c8-8 4-16 12-22" stroke={PAPER} strokeWidth="5" /><path d="M1-3h16v16L9 30 1 13z" fill="#e07000" /><circle cx="9" cy="6" r="4" fill="#fff" /><circle cx="46" cy="46" r="8" fill="#e07000" /></>,
  <g stroke="#8a3a9c" strokeWidth="3" fill={PAPER}><path d="M24 3q3-3 6 0l21 21q3 3 0 6L30 51q-3 3-6 0L3 30q-3-3 0-6z" /><path d="m14 14 26 26M40 14 14 40" fill="none" /><path d="m27 27-9-9q0-8 9-9 9 1 9 9zM27 27l-9 9q0 8 9 9 9-1 9-9z" fill="#e3c4ea" /></g>,
  <g stroke="#1f84d8" strokeWidth="3.500" fill={PAPER}><path d="M2 6h32l18 19-18 19H2l17-19z" /><path d="m17 6 18 19-16 18M12 32l18-14M8 40l26-20" fill="none" /></g>,
  <path d="M6 22h4v4H6zM24 22h4v4h-4zM42 22h4v4h-4z" fill={INK} />,
];

const Toggle = ({ on }: { on?: boolean }) =>
  on ? (
    <div className="flex h-4 w-8 items-center rounded-full bg-[#605e5c] pl-[5px] text-[8.800px] font-semibold text-white">
      <Fit w={12}>On</Fit>
      <div className="ml-[2px] size-[8px] rounded-full bg-white" />
    </div>
  ) : (
    <div className="flex h-4 w-8 items-center rounded-full border border-[#8a8886] bg-white pl-[4px] text-[8.800px] text-[#605e5c]">
      <div className="mr-[2px] size-[8px] rounded-full bg-[#605e5c]" />
      <Fit w={13}>Off</Fit>
    </div>
  );

const Visualizations = () => (
  <div className="flex w-[181px] shrink-0 flex-col border-l border-[#dcdad8] bg-[#f3f2f1] text-[11.200px] text-[#252423]">
    <div className="flex h-[36px] items-center justify-between pt-[3px] pr-[8px] pl-[8px]">
      <div className="text-[15px] font-semibold"><Fit w={99}>Visualizations</Fit></div>
      <DoubleChev />
    </div>
    <div className="flex h-[18px] items-center pl-[8px] font-semibold"><Fit w={61}>Build visual</Fit></div>
    <div className="mt-[3px] flex h-8 pl-[8px]">
      <div className="flex size-8 items-center justify-center rounded-[2px] bg-[#d2d0ce]">
        <svg width="24" height="26" viewBox="0 0 24 26" fill="none">
          <path d="M0 1.500h19" stroke={INK} strokeWidth="1.400" />
          <rect x=".500" y="5.500" width="23" height="7" fill="#f2c811" stroke={INK} strokeDasharray="2 1" />
          <rect x=".500" y="17" width="23" height="7" fill="#f2c811" stroke={INK} strokeDasharray="2 1" />
        </svg>
      </div>
      <Draw x={1637} y={184} w={26} h={32} className="ml-[38px]">
        <path d="M1646 211.500h-8.500v-23h11l7 7M1648.500 188.500v7h7" stroke={INK} strokeWidth="1.200" />
        <path d="m1649 204 11-7.500-8 10.500z" fill={PAPER} stroke={INK} strokeWidth="1.200" />
        <path d="M1649 204c-3 1-2 6-7 6.500 4 2 9 1.500 10-3.500z" fill={GRAY} stroke={INK} strokeWidth="1.200" />
      </Draw>
    </div>
    <svg width="180" height="13" viewBox="0 0 180 13" fill="none" className="block"><path d="M0 12.500h16l8-8 8 8h148" stroke="#8a8886" /></svg>
    <div className="mt-[13px] grid h-[187px] grid-cols-[repeat(6,18px)] content-start gap-[10px] pl-[11px]">
      {vizIcons.map((ic, i) => (
        <svg key={i} width="18" height="18" viewBox="0 0 54 54" fill="none" className="block overflow-visible">{ic}</svg>
      ))}
    </div>
    <div className="mt-[10px] border-t border-[#dcdad8] pr-[6px] pl-[4px]">
      <div className="mt-[7px] flex h-5 items-center pl-[8px]"><Fit w={34}>Values</Fit></div>
      <div className="mt-[3px] flex h-[28px] items-center rounded-[2px] border border-dashed border-[#bebbb8] bg-white pt-px pl-[10px]"><Fit w={107}>Add data fields here</Fit></div>
      <div className="mt-[9px] flex h-5 items-center pl-[8px] font-semibold text-[#484644]"><Fit w={69}>Drill through</Fit></div>
      <div className="mt-[6px] flex h-[18px] items-center justify-between pl-[8px]"><Fit w={66}>Cross-report</Fit><Toggle /></div>
      <div className="mt-[9px] flex h-[18px] items-center justify-between pl-[8px]"><Fit w={74}>Keep all filters</Fit><Toggle on /></div>
      <div className="mt-[9px] flex h-[26px] items-center rounded-[2px] border border-dashed border-[#bebbb8] bg-white pt-px pl-[8px]"><Fit w={151}>Add drill-through fields here</Fit></div>
    </div>
  </div>
);

const fieldRows: { t: string; w: number; kind: "table" | "open" | "field" | "sum" }[] = [
  { t: "companies", w: 57, kind: "table" }, { t: "credit_cards", w: 63, kind: "table" }, { t: "MaxPriceProd", w: 73, kind: "table" },
  { t: "MinMaxProd", w: 68, kind: "open" }, { t: "Full Name", w: 53, kind: "field" }, { t: "MaxPrice", w: 48, kind: "sum" }, { t: "MinPrice", w: 46, kind: "sum" },
  { t: "MinPriceProd", w: 71, kind: "table" }, { t: "products", w: 47, kind: "table" }, { t: "transactions", w: 64, kind: "table" },
  { t: "transactions_products", w: 116, kind: "table" }, { t: "users", w: 27, kind: "table" },
];
const Fields = () => (
  <div className="flex w-[181px] shrink-0 flex-col border-l border-[#dcdad8] bg-[#f3f2f1] text-[#252423]">
    <div className="flex h-[36px] items-center justify-between pt-[3px] pr-[8px] pl-[8px]">
      <div className="text-[15px] font-semibold"><Fit w={41}>Fields</Fit></div>
      <DoubleChev />
    </div>
    <div className="mt-[9px] ml-[4px] flex h-[27px] w-[172px] items-center rounded-[2px] border border-[#605e5c] bg-white pl-[7px] text-[12px] text-[#605e5c]">
      <Magnifier />
      <div className="ml-[6px] pt-px"><Fit w={41}>Search</Fit></div>
    </div>
    <div className="mt-[9px] flex flex-col text-[11.500px] text-[#484644]">
      {fieldRows.map((r) => (
        <div key={r.t} className="flex h-6 items-center">
          {r.kind === "table" || r.kind === "open" ? (
            <>
              <div className="flex w-[22px] justify-center pl-[3px]">
                {r.kind === "open" ? (
                  <svg width="12" height="7" viewBox="0 0 12 7" fill="none"><path d="m.500.500 5.500 5.500L11.500.500" stroke="#8a8886" /></svg>
                ) : (
                  <svg width="7" height="12" viewBox="0 0 7 12" fill="none"><path d="m.500.500 5.500 5.500-5.500 5.500" stroke="#8a8886" /></svg>
                )}
              </div>
              <svg width="13" height="12" viewBox="0 0 13 12" fill="none" className="mr-[6px] shrink-0">
                <path d="M.500.500h12v11H.500zM.500 5.500h12M.500 8.500h12M4.500 2v9.500M8.500 2v9.500" stroke={INK} /><path d="M.500 1.500h12" stroke={INK} strokeWidth="2" />
              </svg>
            </>
          ) : (
            <>
              <div className="ml-[38px] size-3 rounded-[2px] border border-[#8a8886]" />
              <div className="flex w-[26px] justify-start pl-[9px]">
                {r.kind === "sum" && <svg width="10" height="13" viewBox="0 0 10 13" fill="none"><path d="M9.500 2.500v-2H.800l5 6-5 6h8.700v-2" stroke={INK} strokeWidth="1.100" /></svg>}
              </div>
            </>
          )}
          <div className="pt-px"><Fit w={r.w}>{r.t}</Fit></div>
        </div>
      ))}
    </div>
  </div>
);

/* ---------- Frame ---------- */

const Rail = () => (
  <div className="flex w-[41px] shrink-0 flex-col border-r border-[#d2d0ce] bg-[#f3f2f1]">
    <div className="flex h-10 items-center border-l-[3px] border-[#f2c811] pl-[10px]">
      <svg width="16" height="16" viewBox="0 0 16 16" fill="none"><path d="M1 1v13.500h13M3.500 5.500h2v7h-2zM7.500 8.500h1.500v4H7.500zM11 3.500h2v9h-2z" stroke="#252423" strokeWidth="1.200" /></svg>
    </div>
    <div className="flex h-10 items-center pl-[13px]">
      <svg width="16" height="16" viewBox="0 0 16 16" fill="none"><path d="M.500 1h15v14H.500zM.500 4h15M.500 7.500h15M.500 11h15M5.500 4v11M10.500 4v11" stroke="#605e5c" strokeWidth="1.100" /></svg>
    </div>
    <div className="flex h-10 items-center pl-[12px]">
      <svg width="18" height="18" viewBox="0 0 18 18" fill="none"><path d="M10.500.500h7v7h-7zM10.500 3.500h7M10.500 10.500h7v7h-7zM10.500 13.500h7M.500 5.500h6v7h-6zM.500 8.500h6M4.500 5.500v-2h6M4.500 12.500v2h6" stroke="#605e5c" /></svg>
    </div>
  </div>
);

const tabs: [string, number, number][] = [
  ["N1E1", 69, 27], ["N1E2", 69, 28], ["N1E3", 69, 27], ["N1E4", 69, 28], ["N1E5", 69, 28], ["N1E6 - EEUU", 109, 67], ["N2E1", 69, 28],
  ["N2E2", 69, 28], ["N2E3", 69, 28], ["N2E4", 69, 28], ["N2E5", 69, 28], ["N3E1.A", 79, 38], ["N3E1.B", 79, 37], ["N3E1.C", 79, 37], ["N3E1.D", 80, 39], ["N3E1 - TODO", 112, 72],
];
const Tabs = () => (
  <div className="flex h-[35px] bg-[#f3f2f1] text-[11.200px] text-[#252423]">
    <div className="flex w-[40px] shrink-0 items-center justify-between border-r border-[#a19f9d] pr-[7px] pl-[6px]">
      <svg width="4" height="8"><path d="M4 0v8L0 4z" fill="#c8c6c4" /></svg>
      <svg width="4" height="8"><path d="M0 0v8l4-4z" fill="#c8c6c4" /></svg>
    </div>
    {tabs.map(([t, w, tw]) => (
      <div key={t} className="flex shrink-0 items-center justify-center border-r border-[#c8c6c4] pt-px" style={{ width: w }}>
        <Fit w={tw}>{t}</Fit>
      </div>
    ))}
    <div className="flex w-[66px] shrink-0 items-center justify-center border-b-4 border-[#f2c811] bg-white pt-[5px] font-semibold"><Fit w={26}>ID96</Fit></div>
    <div className="mt-[2px] flex h-8 w-10 items-center justify-center bg-[#f2c811]">
      <svg width="12" height="12"><path d="M6 .500v11M.500 6h11" stroke="#7a7876" strokeWidth="3" /></svg>
    </div>
  </div>
);

const Status = () => (
  <div className="flex h-[25px] shrink-0 items-center border-t border-[#dcdad8] bg-[#f3f2f1] pl-[5px] text-[11.200px] text-[#484644]">
    <Fit w={72}>Page 17 of 17</Fit>
    <svg width="125" height="14" viewBox="1506 1108 125 14" className="ml-[1428px] shrink-0" fill="none">
      <path d="M1507 1115.500h5M1622 1115.500h7M1625.500 1112v7" stroke="#484644" strokeWidth="1.500" />
      <path d="M1516 1115h100" stroke="#605e5c" strokeWidth="1.200" /><path d="M1567 1109v12" stroke="#605e5c" strokeWidth="4" />
    </svg>
    <div className="ml-[13px]"><Fit w={29}>103%</Fit></div>
    <svg width="16" height="13" viewBox="0 0 16 13" className="ml-[16px] shrink-0" fill="none"><path d="M.500.500h15v12H.500zM3.500 5V3.500H6M10 3.500h2.500V5M12.500 8v1.500H10M6 9.500H3.500V8" stroke="#484644" /></svg>
    <div className="ml-[18px]"><Fit w={192}>Update available (click to download)</Fit></div>
  </div>
);

export default function App() {
  return (
    <div className="flex h-[1128px] w-[1920px] flex-col overflow-hidden bg-[#f3f2f1] font-['Open_Sans',sans-serif]">
      <div className="flex h-px shrink-0 bg-[#3b3838]"><div className="ml-[10px] w-[30px] bg-black" /></div>
      <Menu />
      <Ribbon />
      <div className="flex h-[975px] shrink-0 shadow-[0_0_2px_1px_rgba(0,0,0,0.1)]">
        <Rail />
        <div className="flex w-[1517px] shrink-0 flex-col">
          <div className="flex h-[940px] bg-white">
            <Canvas />
            <Filters />
          </div>
          <Tabs />
        </div>
        <Visualizations />
        <Fields />
      </div>
      <Status />
      <div className="flex h-px shrink-0 bg-[#37474f]"><div className="ml-[48px] w-[288px] bg-[#c0c4c6]" /></div>
    </div>
  );
}
